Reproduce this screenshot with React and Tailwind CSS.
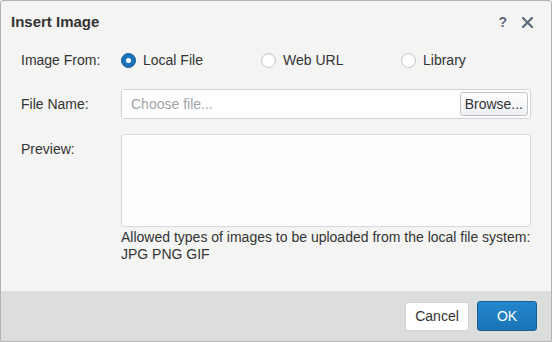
const Radio = ({ checked, label }) => (
  <label className="flex items-center w-[140px] shrink-0">
    {checked ? (
      <span className="w-[15px] h-[15px] rounded-full bg-[#1a72b8] border border-[#155d96] flex items-center justify-center">
        <span className="w-[5px] h-[5px] rounded-full bg-white"></span>
      </span>
    ) : (
      <span className="w-[15px] h-[15px] rounded-full bg-white border border-[#c4c6c8] shadow-[inset_0_1px_1px_rgba(0,0,0,0.06)]"></span>
    )}
    <span className="ml-[7px]">{label}</span>
  </label>
);

const App = () => {
  return (
    <div className="w-[552px] h-[342px] flex flex-col bg-[#f4f5f3] border border-[#b0b2b4] rounded-t-[3px] text-[14px] text-[#333] font-['Liberation_Sans',Arial,sans-serif] overflow-hidden">
      {/* Title bar */}
      <div className="h-[43px] flex items-center pl-[10px] pr-[18px]">
        <h1 className="text-[15px] font-bold text-[#333]">Insert Image</h1>
        <div className="ml-auto flex items-center gap-[15px]">
          <span className="text-[14px] font-bold text-[#5a6a7b]">?</span>
          <svg width="11" height="11" viewBox="0 0 11 11" className="text-[#5a6a7b]">
            <path d="M1 1L10 10M10 1L1 10" stroke="currentColor" strokeWidth="2.2" strokeLinecap="square" />
          </svg>
        </div>
      </div>

      {/* Body */}
      <div className="pl-[20px] pr-[20px]">
        <div className="flex items-center h-[32px]">
          <div className="w-[100px] shrink-0">Image From:</div>
          <Radio checked label="Local File" />
          <Radio label="Web URL" />
          <Radio label="Library" />
        </div>

        <div className="flex items-center mt-[13px]">
          <div className="w-[100px] shrink-0">File Name:</div>
          <div className="flex-1 h-[30px] bg-white border border-[#d0d2d4] rounded-[3px] flex items-center pl-[9px] pr-[2px]">
            <span className="text-[#a0a4a8]">Choose file...</span>
            <button className="ml-auto h-[24px] px-[4px] bg-gradient-to-b from-white to-[#eef0f4] border border-[#c0c4c8] rounded-[3px] text-[#333]">
              Browse...
            </button>
          </div>
        </div>

        <div className="flex mt-[15px]">
          <div className="w-[100px] shrink-0 pt-[5px]">Preview:</div>
          <div className="flex-1">
            <div className="h-[93px] bg-[#fdfefd] border border-[#d6d8da] rounded-[3px]"></div>
            <p className="mt-[2px] leading-[17px]">
              Allowed types of images to be uploaded from the local file system:
              <br />
              JPG PNG GIF
            </p>
          </div>
        </div>
      </div>

      {/* Footer */}
      <div className="mt-auto h-[50px] bg-[#dcdedb] flex items-center justify-end gap-[8px] pr-[14px]">
        <button className="h-[29px] w-[64px] bg-white border border-[#d2d4d6] rounded-[3px] text-[#333]">Cancel</button>
        <button className="h-[30px] w-[60px] bg-gradient-to-b from-[#2487cc] to-[#1a74b6] border border-[#15609a] rounded-[3px] text-white">OK</button>
      </div>
    </div>
  );
};

export default App;
